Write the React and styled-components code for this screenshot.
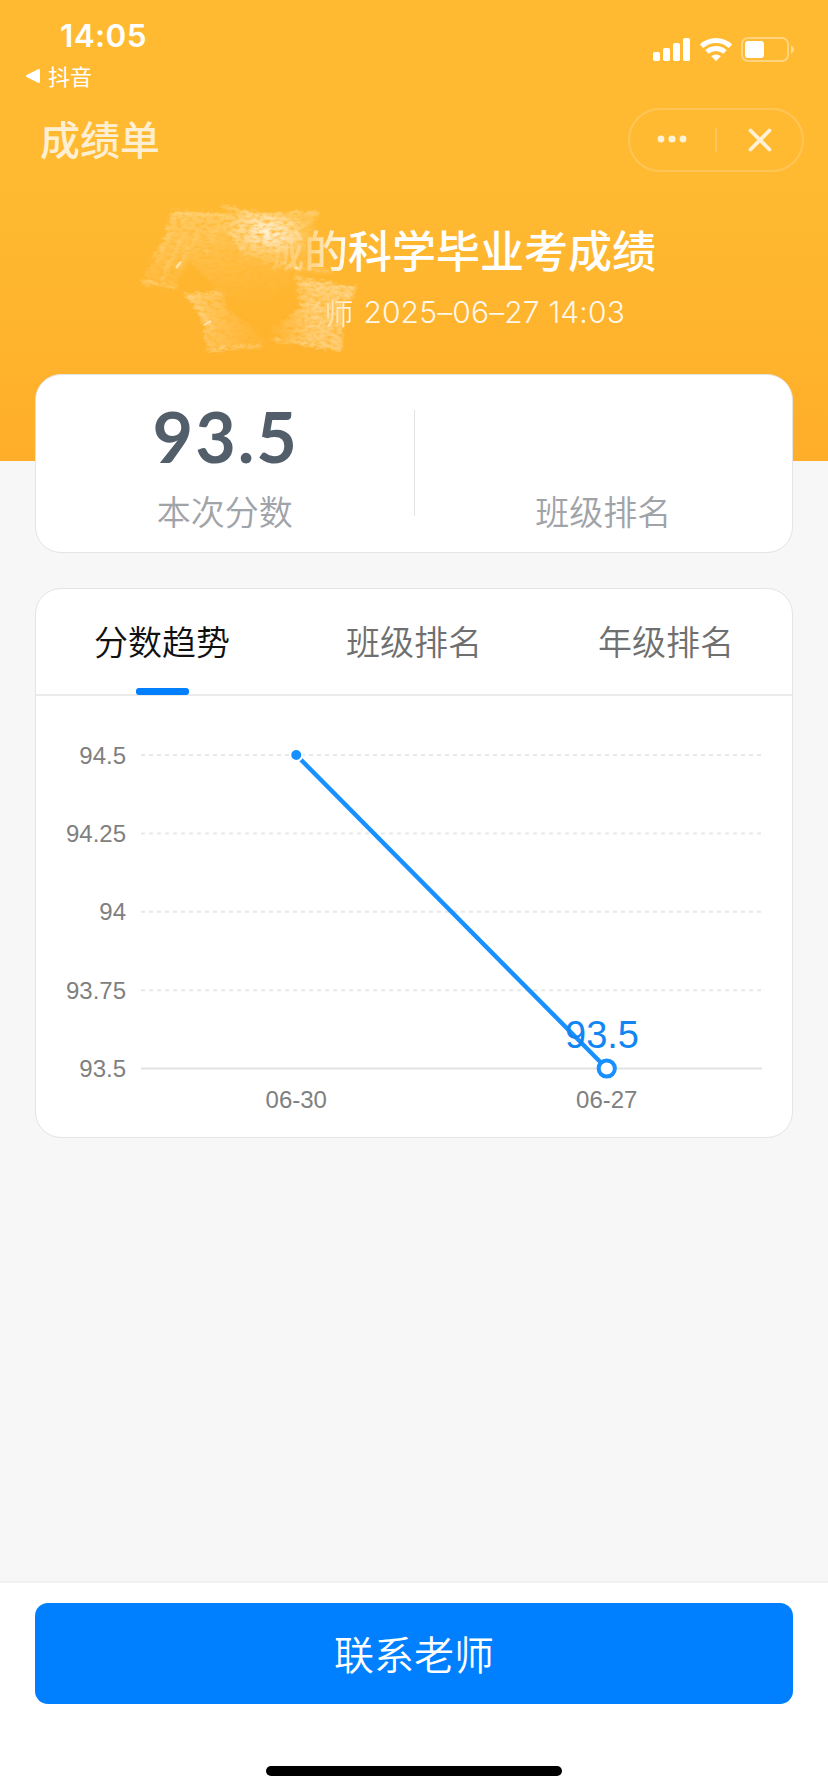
import React, { Component } from 'react'
import styled, { createGlobalStyle } from 'styled-components'

const GlobalStyle = createGlobalStyle`
    * {
        box-sizing: border-box;
    }

    body {
        margin: 0;
        background: #f7f7f7;
        font-family: Inter, 'Noto Sans CJK SC', sans-serif;
    }
`

const Page = styled.div`
    display: flex;
    flex-direction: column;
    width: 828px;
    height: 1792px;
    overflow: hidden;
    background: #f7f7f7;
`

const Header = styled.header`
    flex: none;
    height: 461px;
    background: linear-gradient(#ffba32 0, #ffba32 180px, #ffae2a 100%);
    color: #fff;
`

const StatusBar = styled.div`
    display: flex;
    justify-content: space-between;
    height: 100px;
    padding: 16px 33px 0 25px;
`

const Clock = styled.div`
    padding-left: 35px;
    font-size: 31.5px;
    font-weight: 600;
    line-height: 40px;
    letter-spacing: 0.4px;
`

const BackLink = styled.div`
    display: flex;
    align-items: center;
    gap: 7px;
    height: 40px;
    font: 400 22px/38px 'Noto Sans CJK SC', sans-serif;
`

const BackText = styled.span`
    height: 41px;
`

const StatusIcons = styled.svg`
    margin-top: 18px;
`

const NavBar = styled.div`
    display: flex;
    align-items: center;
    justify-content: space-between;
    height: 80px;
    padding: 0 24px 0 40px;
`

const NavTitle = styled.div`
    height: 64px;
    font: 500 40px/60px 'Noto Sans CJK SC', sans-serif;
    color: rgba(255, 255, 255, 0.8);
`

const Capsule = styled.div`
    display: flex;
    align-items: center;
    width: 176px;
    height: 64px;
    border: 2px solid rgba(255, 255, 255, 0.18);
    border-radius: 32px;
`

const Heading = styled.div`
    position: relative;
    height: 194px;
    padding: 37px 172px 0;
    text-align: right;
`

const ReportTitle = styled.h1`
    margin: 0;
    font: 500 44px/64px 'Noto Sans CJK SC', sans-serif;
`

const Faded = styled.span`
    background: linear-gradient(
        90deg,
        rgba(255, 255, 255, ${props => props.$from}),
        rgba(255, 255, 255, ${props => props.$to})
    );
    background-clip: text;
    color: transparent;
`

const ReportMeta = styled.div`
    display: flex;
    align-items: center;
    justify-content: flex-end;
    gap: 10px;
    height: 62px;
    padding-right: 31px;
    font-size: 30px;
    font-weight: 300;
    letter-spacing: 0.15px;
    color: rgba(255, 255, 255, 0.92);
`

const Teacher = styled.span`
    font: 350 29px/58px 'Noto Sans CJK SC', sans-serif;
`

const Smudge = styled.svg`
    position: absolute;
    left: 120px;
    top: 0;
`

const Content = styled.main`
    flex: 1;
    display: flex;
    flex-direction: column;
    gap: 35px;
    margin-top: -87px;
    padding: 0 35px;
`

const Card = styled.section`
    flex: none;
    height: ${props => props.$height}px;
    border: 1px solid #e4e4e4;
    border-radius: 26px;
    background: #fff;
`

const ScoreCard = styled(Card)`
    display: flex;
`

const ScoreCell = styled.div`
    flex: 1;
    display: flex;
    flex-direction: column;
    align-items: center;
    padding-top: 24px;
`

const ScoreDivider = styled.div`
    width: 1px;
    height: 106px;
    margin-top: 35px;
    background: #e2e2e2;
`

const Score = styled.div`
    height: 86px;
    padding-left: 2px;
    font: 700 70px/74px Lato, sans-serif;
    letter-spacing: 2px;
    color: #525e69;
`

const ScoreLabel = styled.div`
    font: 350 34px/52px 'Noto Sans CJK SC', sans-serif;
    color: #a0a3a8;
`

const Tabs = styled.div`
    display: flex;
    height: 107px;
    border-bottom: 2px solid #ebebeb;
`

const Tab = styled.div`
    flex: 1;
    display: flex;
    flex-direction: column;
    align-items: center;
    justify-content: space-between;
    padding-top: 26px;
    font: 350 34px/52px 'Noto Sans CJK SC', sans-serif;
    color: ${props => (props.$active ? '#111' : '#6f6f6f')};

    &::after {
        content: '';
        width: 53px;
        height: 7px;
        margin-bottom: -1px;
        border-radius: 3px;
        background: ${props => (props.$active ? '#0080ff' : 'transparent')};
    }
`

const Chart = styled.svg`
    display: block;
    font-family: 'Liberation Sans', Arial, sans-serif;
`

const Footer = styled.footer`
    flex: none;
    display: flex;
    flex-direction: column;
    align-items: center;
    height: 211px;
    padding: 20px 35px 0;
    border-top: 2px solid #f1f1f1;
    background: #fff;
`

const ContactButton = styled.button`
    width: 100%;
    height: 101px;
    padding: 0 0 2px;
    border: 0;
    border-radius: 13px;
    background: #0080ff;
    color: #fff;
    font: 350 40px/60px 'Noto Sans CJK SC', sans-serif;
`

const HomeIndicator = styled.div`
    width: 296px;
    height: 10px;
    margin-top: 62px;
    border-radius: 5px;
    background: #000;
`

const tabs = ['分数趋势', '班级排名', '年级排名']

const ticks = [94.5, 94.25, 94, 93.75, 93.5]

const points = [
    { date: '06-30', score: 94.5 },
    { date: '06-27', score: 93.5 },
]

// plot area inside the trend chart svg
const plot = { left: 105, right: 726, top: 59, bottom: 372.5 }

const scaleY = value =>
    plot.top + (94.5 - value) * (plot.bottom - plot.top)

const scaleX = index =>
    plot.left + ((plot.right - plot.left) / points.length) * (index + 0.5)

const SignalGroup = () => (
    <StatusIcons width="144" height="30" viewBox="0 0 144 30" fill="#fff">
        <rect x="2" y="18" width="7" height="9" rx="1.8" />
        <rect x="12" y="14" width="7" height="13" rx="1.8" />
        <rect x="22" y="9" width="7" height="18" rx="1.8" />
        <rect x="32" y="4" width="7" height="23" rx="1.8" />
        <g fill="none" stroke="#fff" strokeWidth="5">
            <path d="M50.5 12.2a21 21 0 0 1 29 0" />
            <path d="M56 18a13.2 13.2 0 0 1 18 0" />
        </g>
        <path d="M65 27l-4.8-4.7a7 7 0 0 1 9.6 0z" />
        <rect x="91" y="4" width="46" height="23" rx="6" fill="none" stroke="#fff" strokeOpacity=".38" strokeWidth="2" />
        <rect x="94" y="7" width="19" height="17" rx="3" />
        <path d="M140 11.5c4 1.6 4 6.4 0 8z" fillOpacity=".45" />
    </StatusIcons>
)

const MenuCapsule = () => (
    <Capsule>
        <svg width="172" height="60" viewBox="0 0 172 60">
            <g fill="#fff" fillOpacity=".8">
                <circle cx="31" cy="29" r="3.4" />
                <circle cx="42" cy="29" r="3.6" />
                <circle cx="53" cy="29" r="3.4" />
            </g>
            <path d="M86 18v24" stroke="#fff" strokeOpacity=".2" strokeWidth="2" />
            <path d="M120.5 20.5l19 19m0-19l-19 19" stroke="#fff" strokeOpacity=".8" strokeWidth="3.8" strokeLinecap="round" />
        </svg>
    </Capsule>
)

// brushed-out student and teacher names
const NameSmudge = () => (
    <Smudge width="260" height="190" viewBox="0 0 260 190">
        <defs>
            <filter id="brush" x="-10%" y="-10%" width="120%" height="120%">
                <feTurbulence type="fractalNoise" baseFrequency="0.16 0.3" numOctaves="3" seed="8" result="noise" />
                <feGaussianBlur in="SourceGraphic" stdDeviation="0.8" result="soft" />
                <feDisplacementMap in="soft" in2="noise" scale="8" xChannelSelector="R" yChannelSelector="G" result="rough" />
                <feColorMatrix in="noise" type="matrix" values="0 0 0 0 1  0 0 0 0 1  0 0 0 0 1  1.8 1 0 0 -0.6" result="grain" />
                <feComposite in="rough" in2="grain" operator="in" />
            </filter>
            <linearGradient id="upper" x1="0" y1="0" x2="0.35" y2="1">
                <stop offset="0" stopColor="#ffe2a6" stopOpacity=".5" />
                <stop offset=".45" stopColor="#ffdb95" stopOpacity=".32" />
                <stop offset="1" stopColor="#ffd080" stopOpacity=".08" />
            </linearGradient>
            <radialGradient id="bright" cx=".5" cy=".45" r=".55">
                <stop offset="0" stopColor="#fff3dc" stopOpacity=".95" />
                <stop offset=".5" stopColor="#ffe5b4" stopOpacity=".6" />
                <stop offset="1" stopColor="#ffd890" stopOpacity="0" />
            </radialGradient>
            <linearGradient id="lower" x1="0" y1="0" x2="1" y2="0">
                <stop offset="0" stopColor="#ffd68c" stopOpacity="0" />
                <stop offset=".5" stopColor="#ffdc9a" stopOpacity=".65" />
                <stop offset="1" stopColor="#ffdc9a" stopOpacity=".65" />
            </linearGradient>
            <linearGradient id="corner" x1="0" y1="0" x2="1" y2="0">
                <stop offset="0" stopColor="#ffe2a8" stopOpacity=".6" />
                <stop offset="1" stopColor="#ffd68c" stopOpacity="0" />
            </linearGradient>
        </defs>
        <g filter="url(#brush)">
            <path d="M52 31L90 34 200 33 194 42 178 50 192 78 212 92 178 98 150 120 104 118 70 80 56 106 22 106 34 76 46 54z" fill="url(#upper)" />
            <path d="M100 24L148 34 196 44 190 82 160 84 126 74 104 50z" fill="url(#bright)" />
            <ellipse cx="149" cy="55" rx="28" ry="16" transform="rotate(18 149 55)" fill="url(#bright)" />
            <path d="M176 98L236 107 234 116 224 122 222 170 170 162 148 150 180 128z" fill="url(#lower)" />
            <path d="M64 114L104 112 106 128 136 150 150 164 88 172 84 148 76 130z" fill="url(#corner)" />
        </g>
        <g filter="url(#brush)" fill="none" stroke="#ffe0a0" strokeWidth="3" strokeOpacity=".5" strokeLinecap="round">
            <path d="M54 32l50 3M150 34l48-1M102 26l42 12" />
            <path d="M52 50l-14 30M62 58l-20 42M78 54l-20 34M100 44l-14 30" strokeOpacity=".3" />
            <path d="M24 102l32 5M176 98l58 10M182 104l50 14" />
            <path d="M156 84l54 8M66 116l36-3M78 128l16 20" strokeOpacity=".38" />
            <path d="M88 170l52-4M152 160l34 4 34 6" strokeOpacity=".55" />
            <path d="M110 50l18 28M124 66l22 16" strokeOpacity=".35" />
        </g>
        <path d="M84 145l7-4M178 88l-3 0M56 88l5-6" stroke="#fff3d8" strokeWidth="2" strokeOpacity=".7" />
    </Smudge>
)

const TrendChart = () => (
    <Chart width="756" height="440" viewBox="0 0 756 440">
        {ticks.map(tick => (
            <g key={tick}>
                <text x="90" y={scaleY(tick) + 8.5} fontSize="24" textAnchor="end" fill="#808080">
                    {tick}
                </text>
                <line
                    x1={plot.left}
                    x2={plot.right}
                    y1={scaleY(tick)}
                    y2={scaleY(tick)}
                    stroke={tick === 93.5 ? '#e2e2e2' : '#e8e8e8'}
                    strokeWidth="2"
                    strokeDasharray={tick === 93.5 ? 'none' : '4 4'}
                />
            </g>
        ))}
        {points.map((point, index) => (
            <text key={point.date} x={scaleX(index)} y="411.5" fontSize="24" textAnchor="middle" fill="#808080">
                {point.date}
            </text>
        ))}
        <line x1={scaleX(0)} y1={scaleY(94.5)} x2={scaleX(1)} y2={scaleY(93.5)} stroke="#1890ff" strokeWidth="4.4" />
        <circle cx={scaleX(0)} cy={scaleY(94.5)} r="6" fill="#1890ff" stroke="#fff" strokeWidth="2" />
        <circle cx={scaleX(1)} cy={scaleY(93.5)} r="8.1" fill="#fff" stroke="#1890ff" strokeWidth="4" />
        <text x="566" y="352" fontSize="38" textAnchor="middle" fill="#1186f2">
            93.5
        </text>
    </Chart>
)

class App extends Component {
    constructor(props) {
        super(props)

        this.state = {
            activeTab: 0,
        }
    }

    handleSelectTab = activeTab => {
        this.setState({ activeTab })
    }

    render() {
        const { activeTab } = this.state
        return (
            <Page>
                <GlobalStyle />
                <Header>
                    <StatusBar>
                        <div>
                            <Clock>14:05</Clock>
                            <BackLink>
                                <svg width="16" height="16" viewBox="0 0 16 16">
                                    <path d="M2 8L14 2v12z" fill="#fff" stroke="#fff" strokeWidth="2" strokeLinejoin="round" />
                                </svg>
                                <BackText>抖音</BackText>
                            </BackLink>
                        </div>
                        <SignalGroup />
                    </StatusBar>
                    <NavBar>
                        <NavTitle>成绩单</NavTitle>
                        <MenuCapsule />
                    </NavBar>
                    <Heading>
                        <NameSmudge />
                        <ReportTitle>
                            <Faded $from={0} $to={0.4}>城</Faded>
                            <Faded $from={0.3} $to={1}>的</Faded>
                            科学毕业考成绩
                        </ReportTitle>
                        <ReportMeta>
                            <Teacher>
                                <Faded $from={0} $to={0.4}>老</Faded>
                                <Faded $from={0.7} $to={0.95}>师</Faded>
                            </Teacher>
                            2025–06–27 14:03
                        </ReportMeta>
                    </Heading>
                </Header>

                <Content>
                    <ScoreCard $height={179}>
                        <ScoreCell>
                            <Score>93.5</Score>
                            <ScoreLabel>本次分数</ScoreLabel>
                        </ScoreCell>
                        <ScoreDivider />
                        <ScoreCell>
                            <Score />
                            <ScoreLabel>班级排名</ScoreLabel>
                        </ScoreCell>
                    </ScoreCard>

                    <Card $height={550}>
                        <Tabs>
                            {tabs.map((tab, index) => (
                                <Tab
                                    key={tab}
                                    $active={index === activeTab}
                                    onClick={() => this.handleSelectTab(index)}
                                >
                                    {tab}
                                </Tab>
                            ))}
                        </Tabs>
                        <TrendChart />
                    </Card>
                </Content>

                <Footer>
                    <ContactButton>联系老师</ContactButton>
                    <HomeIndicator />
                </Footer>
            </Page>
        )
    }
}

export default App
